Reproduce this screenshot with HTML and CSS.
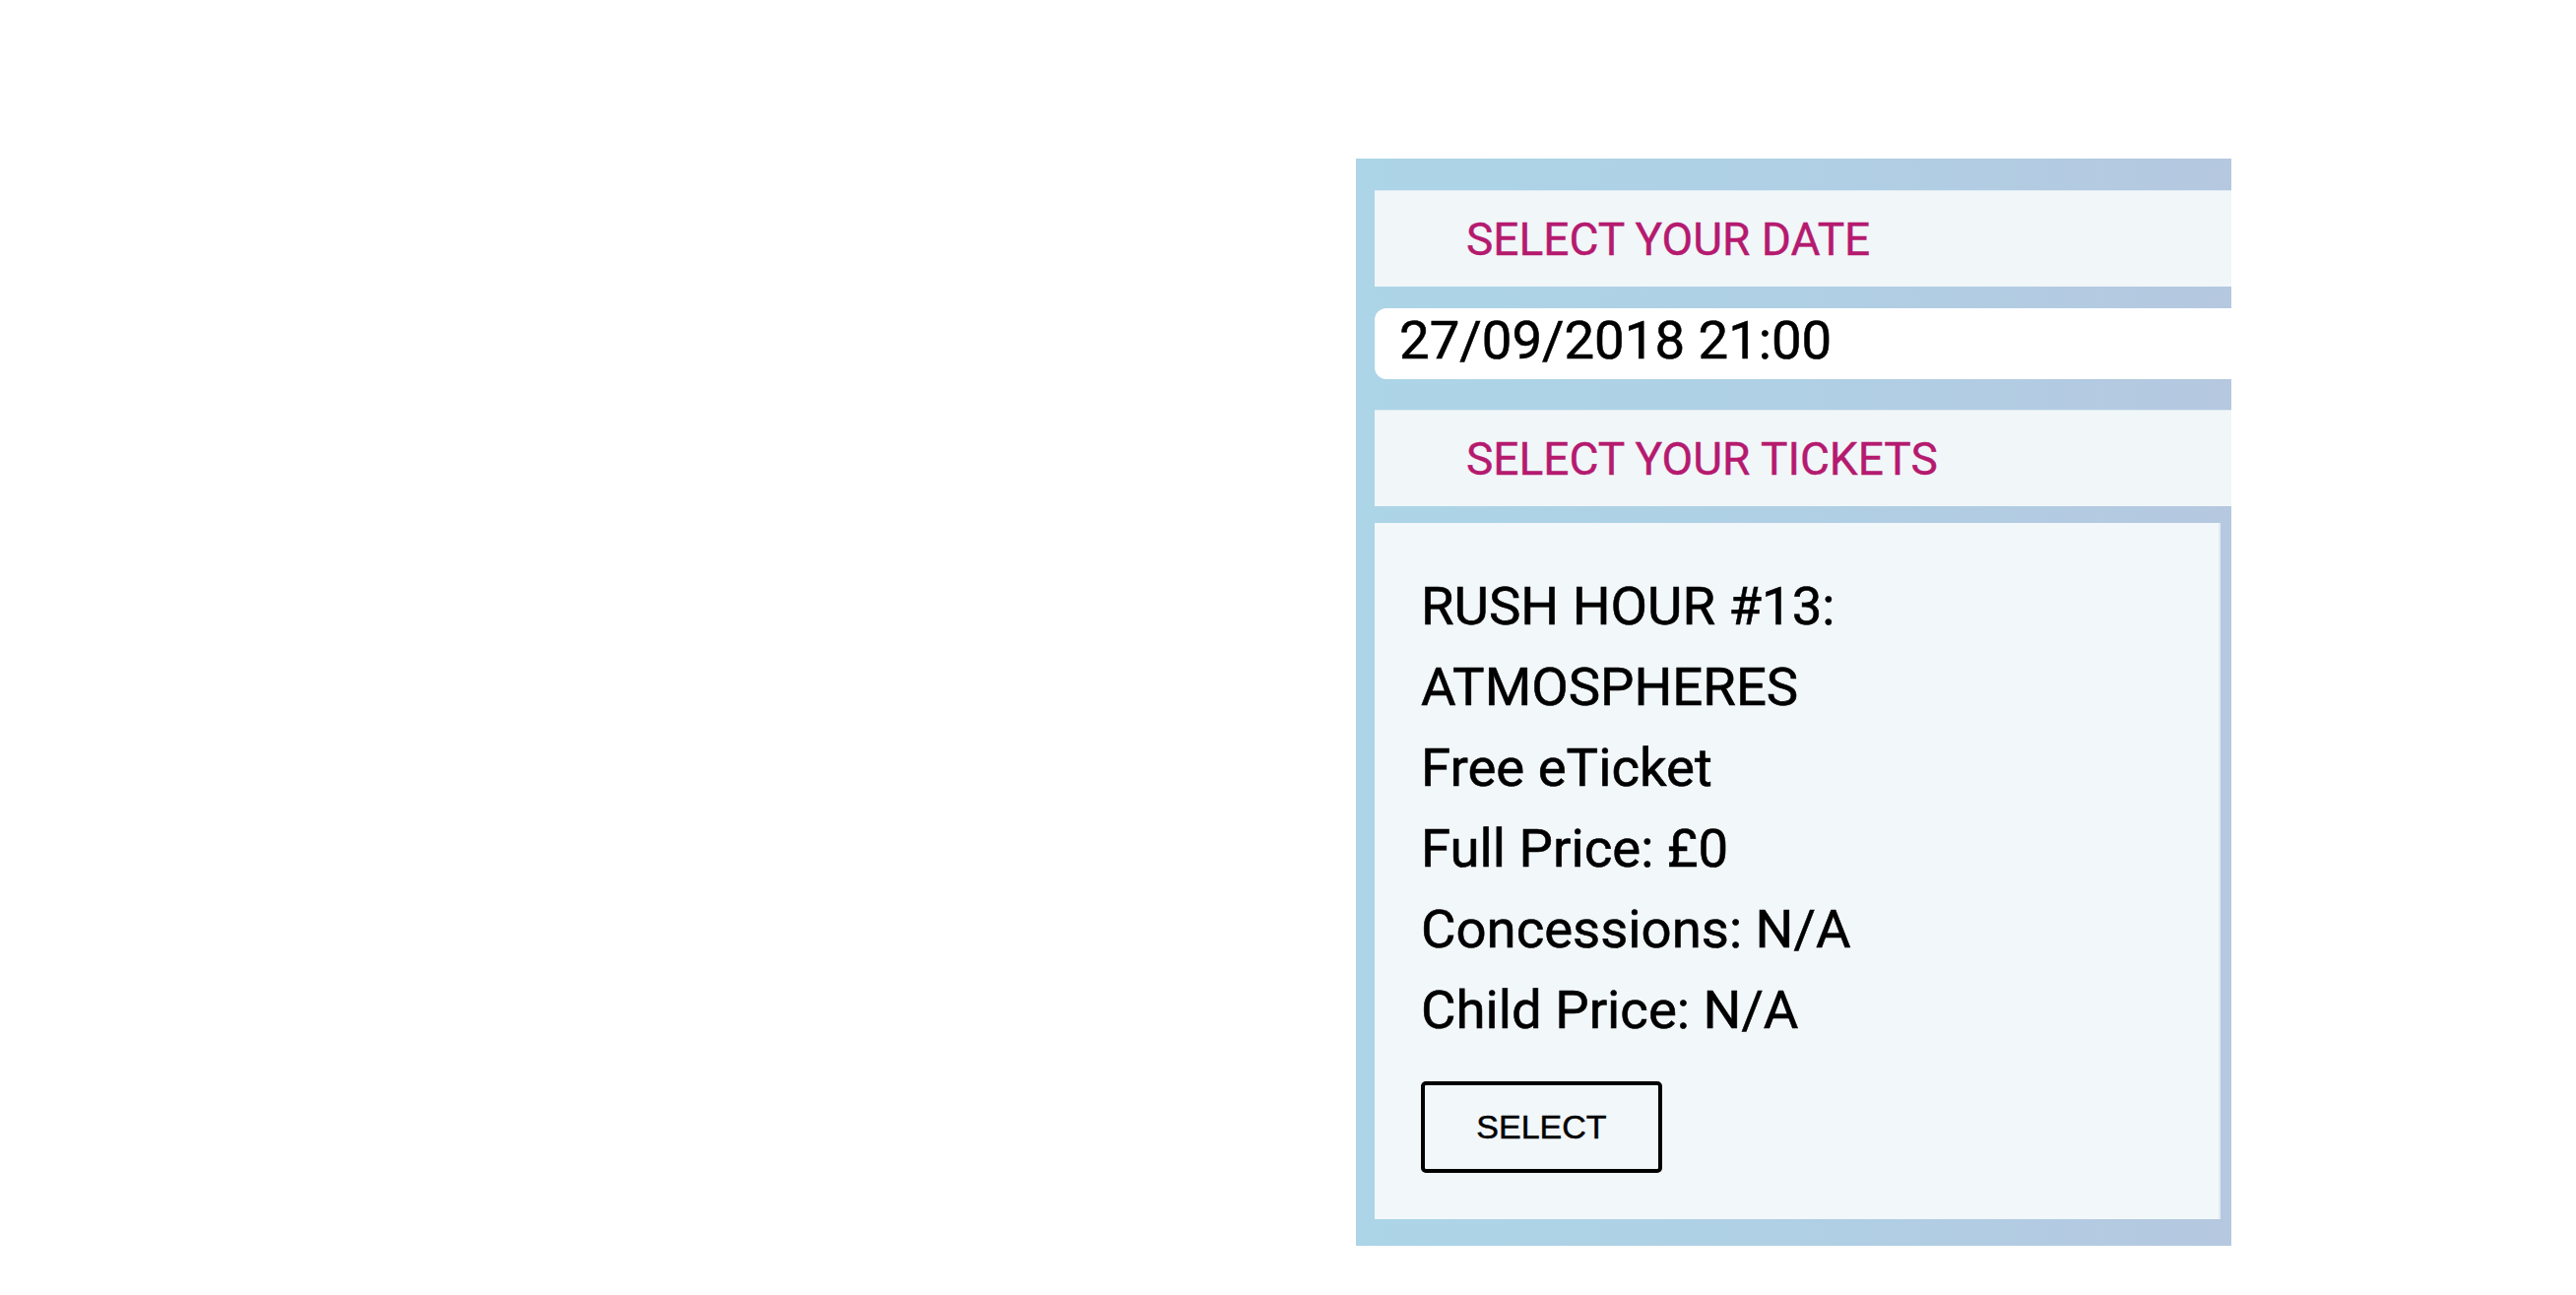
FILE: index.html
```html
<!DOCTYPE html>
<html lang="en">
<head>
<meta charset="utf-8">
<title>Select your date</title>
<link rel="stylesheet" href="styles.css">
</head>
<body>
<div class="page">
  <section class="panel">
    <div class="step-head">SELECT YOUR DATE</div>
    <div class="date-field">27/09/2018 21:00</div>
    <div class="step-head step-head--tickets">SELECT YOUR TICKETS</div>
    <div class="ticket-card">
      <div class="ticket-info">
        <p>RUSH HOUR #13:</p>
        <p>ATMOSPHERES</p>
        <p>Free eTicket</p>
        <p>Full Price: £0</p>
        <p>Concessions: N/A</p>
        <p>Child Price: N/A</p>
      </div>
      <button class="select-btn" type="button">SELECT</button>
    </div>
  </section>
</div>
</body>
</html>
```

FILE: styles.css
```css
html, body {
  margin: 0;
  padding: 0;
  background: #ffffff;
}

.page {
  padding: 161px 0 0 1377px;
}

.panel {
  width: 889px;
  box-sizing: border-box;
  padding: 32px 11px 27px 19px;
  background: linear-gradient(90deg, #acd5e7 0%, #b0cfe4 55%, #b5c8e0 100%);
  overflow: hidden;
  font-family: Roboto, "Noto Sans", sans-serif;
  display: flex;
  flex-direction: column;
}

.step-head {
  height: 98px;
  margin-right: -11px;
  box-sizing: border-box;
  padding-left: 93px;
  display: flex;
  align-items: center;
  background: #f1f6f9;
  border-top: 1px solid #dceaf3;
  color: #b51a6f;
  font-size: 46px;
  -webkit-text-stroke: 0.4px #b51a6f;
}

.date-field {
  margin-top: 22px;
  margin-right: -11px;
  height: 72px;
  box-sizing: border-box;
  padding: 0 0 7px 25px;
  display: flex;
  align-items: center;
  background: #ffffff;
  border-radius: 12px 0 0 12px;
  color: #000000;
  font-size: 54.5px;
  line-height: 1;
  -webkit-text-stroke: 0.6px #000000;
}

.step-head--tickets {
  margin-top: 31px;
}

.ticket-card {
  margin-top: 17px;
  height: 707px;
  box-sizing: border-box;
  padding: 43px 40px 0 47px;
  background: #f2f7fa;
  border-right: 2px solid #e2ecf4;
}

.ticket-info p {
  margin: 0;
  font-size: 54.5px;
  line-height: 82px;
  color: #000000;
  -webkit-text-stroke: 0.6px #000000;
}

.select-btn {
  margin-top: 32px;
  width: 245px;
  height: 93px;
  box-sizing: border-box;
  border: 4px solid #000000;
  border-radius: 5px;
  background: transparent;
  color: #000000;
  font-family: "Liberation Sans", Arial, sans-serif;
  font-size: 34px;
  -webkit-text-stroke: 0.5px #000000;
  padding: 0;
  cursor: pointer;
}
```
